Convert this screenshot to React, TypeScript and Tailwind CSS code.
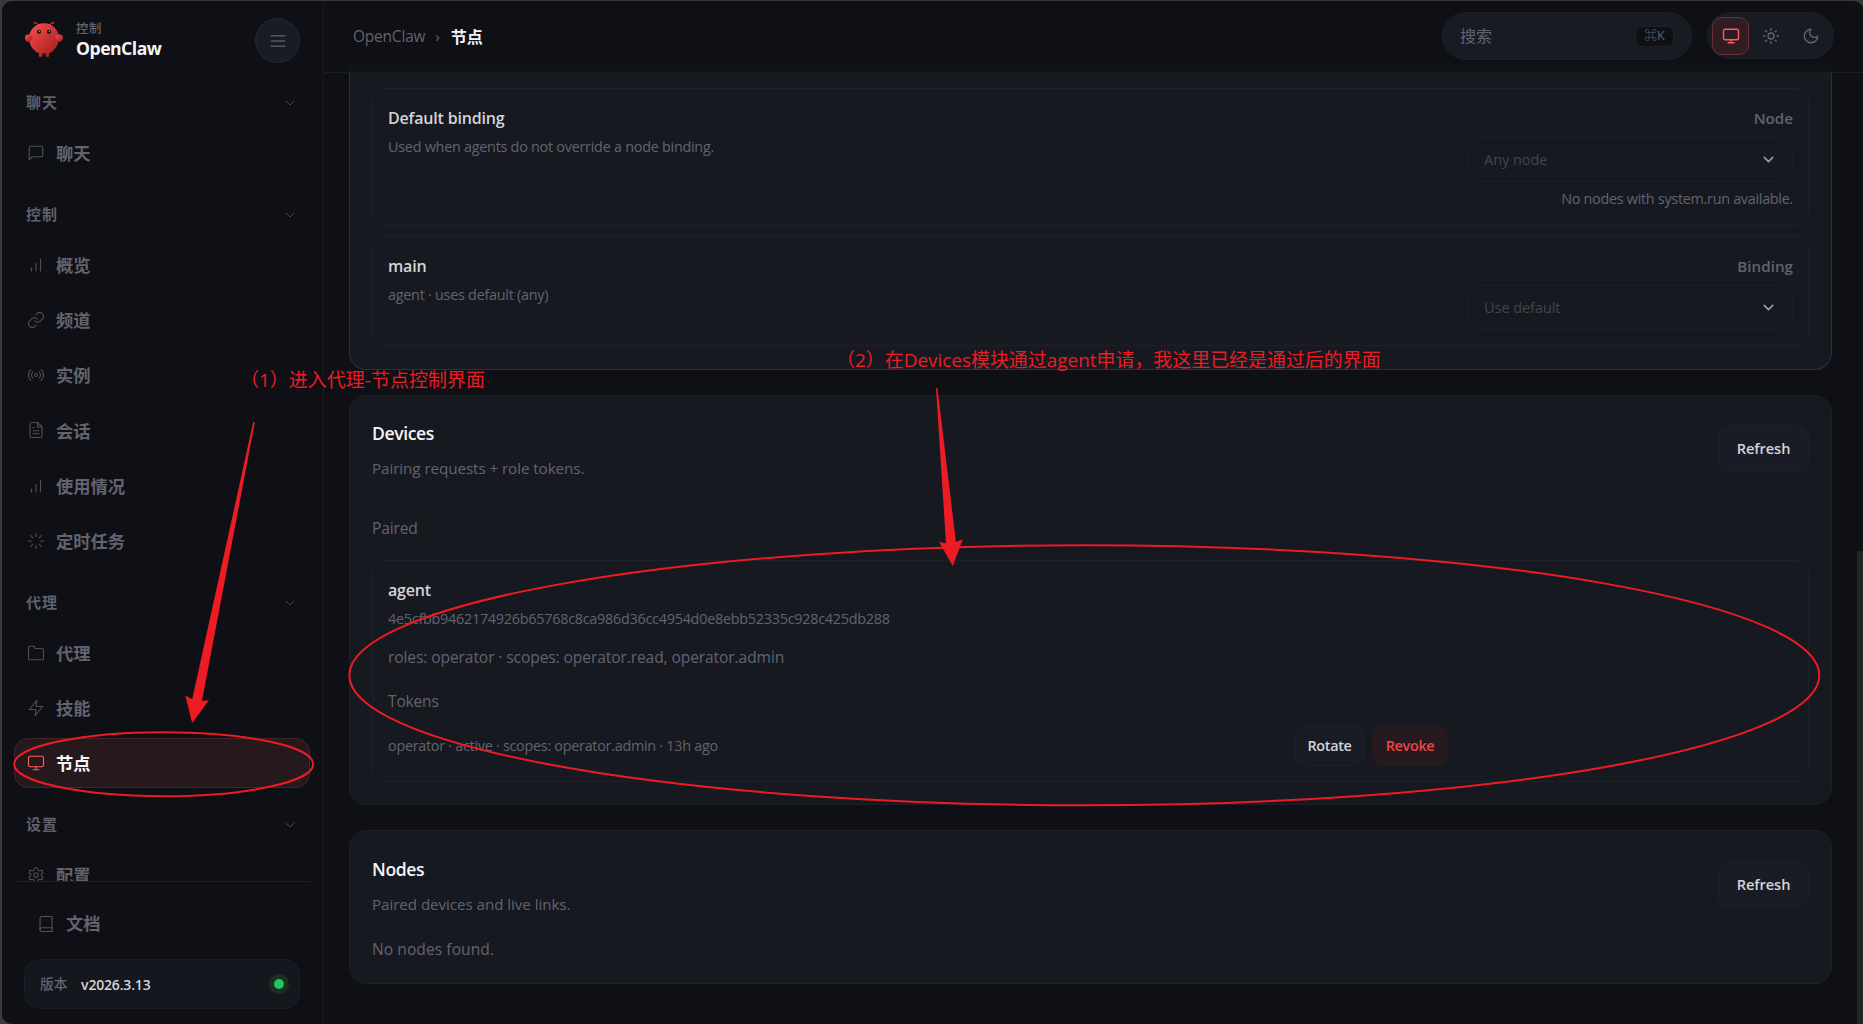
import {ReactNode} from 'react';
import clsx from 'clsx';

interface NavItem {
  label: string;
  icon: string;
  active?: boolean;
}

interface NavSection {
  title: string;
  items: NavItem[];
}

const icons: Record<string, ReactNode> = {
  chat: <path d="M21 15a2 2 0 0 1-2 2H7l-4 4V5a2 2 0 0 1 2-2h14a2 2 0 0 1 2 2z" />,
  bars: <path d="M12 20V10M18 20V4M6 20v-4" />,
  link: (
    <>
      <path d="M10 13a5 5 0 0 0 7.54.54l3-3a5 5 0 0 0-7.07-7.07l-1.72 1.71" />
      <path d="M14 11a5 5 0 0 0-7.54-.54l-3 3a5 5 0 0 0 7.07 7.07l1.71-1.71" />
    </>
  ),
  radio: (
    <>
      <circle cx="12" cy="12" r="2" />
      <path d="M16.24 7.76a6 6 0 0 1 0 8.49m-8.48-.01a6 6 0 0 1 0-8.49m11.31-2.82a10 10 0 0 1 0 14.14m-14.14 0a10 10 0 0 1 0-14.14" />
    </>
  ),
  file: (
    <>
      <path d="M14 2H6a2 2 0 0 0-2 2v16a2 2 0 0 0 2 2h12a2 2 0 0 0 2-2V8z" />
      <path d="M14 2v6h6M16 13H8M16 17H8M10 9H8" />
    </>
  ),
  loader: (
    <path d="M12 2v4M12 18v4M4.93 4.93l2.83 2.83M16.24 16.24l2.83 2.83M2 12h4M18 12h4M4.93 19.07l2.83-2.83M16.24 7.76l2.83-2.83" />
  ),
  folder: <path d="M22 19a2 2 0 0 1-2 2H4a2 2 0 0 1-2-2V5a2 2 0 0 1 2-2h5l2 3h9a2 2 0 0 1 2 2z" />,
  zap: <path d="M13 2 3 14h9l-1 8 10-12h-9l1-8z" />,
  monitor: (
    <>
      <rect x="2" y="3" width="20" height="14" rx="2" />
      <path d="M8 21h8M12 17v4" />
    </>
  ),
  settings: (
    <>
      <path d="M9.671 4.136a2.34 2.34 0 0 1 4.659 0 2.34 2.34 0 0 0 3.319 1.915 2.34 2.34 0 0 1 2.33 4.033 2.34 2.34 0 0 0 0 3.831 2.34 2.34 0 0 1-2.33 4.033 2.34 2.34 0 0 0-3.319 1.915 2.34 2.34 0 0 1-4.659 0 2.34 2.34 0 0 0-3.32-1.915 2.34 2.34 0 0 1-2.33-4.033 2.34 2.34 0 0 0 0-3.831A2.34 2.34 0 0 1 6.35 6.051a2.34 2.34 0 0 0 3.319-1.915" />
      <circle cx="12" cy="12" r="3" />
    </>
  ),
  book: (
    <>
      <path d="M4 19.5A2.5 2.5 0 0 1 6.5 17H20" />
      <path d="M6.5 2H20v20H6.5A2.5 2.5 0 0 1 4 19.5v-15A2.5 2.5 0 0 1 6.5 2z" />
    </>
  ),
  menu: <path d="M3 5h18M3 12h18M3 19h18" />,
  sun: (
    <>
      <circle cx="12" cy="12" r="4" />
      <path d="M12 2v2M12 20v2M4.93 4.93l1.41 1.41M17.66 17.66l1.41 1.41M2 12h2M20 12h2M6.34 17.66l-1.41 1.41M19.07 4.93l-1.41 1.41" />
    </>
  ),
  moon: <path d="M12 3a6 6 0 0 0 9 9 9 9 0 1 1-9-9z" />,
  chevron: <path d="m6 9 6 6 6-6" />,
};

const Icon = ({name, className, stroke = 1.5}: {name: string; className?: string; stroke?: number}) => (
  <svg
    viewBox="0 0 24 24"
    fill="none"
    stroke="currentColor"
    strokeWidth={stroke}
    strokeLinecap="round"
    strokeLinejoin="round"
    className={clsx('shrink-0', className)}
  >
    {icons[name]}
  </svg>
);

const sections: NavSection[] = [
  {title: '聊天', items: [{label: '聊天', icon: 'chat'}]},
  {
    title: '控制',
    items: [
      {label: '概览', icon: 'bars'},
      {label: '频道', icon: 'link'},
      {label: '实例', icon: 'radio'},
      {label: '会话', icon: 'file'},
      {label: '使用情况', icon: 'bars'},
      {label: '定时任务', icon: 'loader'},
    ],
  },
  {
    title: '代理',
    items: [
      {label: '代理', icon: 'folder'},
      {label: '技能', icon: 'zap'},
      {label: '节点', icon: 'monitor', active: true},
    ],
  },
  {title: '设置', items: [{label: '配置', icon: 'settings'}]},
];

const Logo = () => (
  <svg viewBox="0 0 120 120" fill="none" className="w-10 h-10 mt-[19px] shrink-0">
    <defs>
      <linearGradient id="claw" x1="0%" y1="0%" x2="100%" y2="100%">
        <stop offset="0%" stopColor="#ff4d4d" />
        <stop offset="100%" stopColor="#991b1b" />
      </linearGradient>
    </defs>
    <path
      fill="url(#claw)"
      d="M60 10C30 10 15 35 15 55C15 75 30 95 45 100L45 110L55 110L55 100C55 100 60 102 65 100L65 110L75 110L75 100C90 95 105 75 105 55C105 35 90 10 60 10Z"
    />
    <path fill="url(#claw)" d="M20 45C5 40 0 50 5 60C10 70 20 65 25 55C28 48 25 45 20 45Z" />
    <path fill="url(#claw)" d="M100 45C115 40 120 50 115 60C110 70 100 65 95 55C92 48 95 45 100 45Z" />
    <path d="M45 15Q35 5 30 8M75 15Q85 5 90 8" stroke="#ff4d4d" strokeWidth="3" strokeLinecap="round" />
    <circle cx="45" cy="35" r="6" fill="#050810" />
    <circle cx="75" cy="35" r="6" fill="#050810" />
    <circle cx="46" cy="34" r="2.5" fill="#00e5cc" />
    <circle cx="76" cy="34" r="2.5" fill="#00e5cc" />
  </svg>
);

const Sidebar = () => (
  <aside className="w-[322px] shrink-0 flex flex-col pl-3 pr-[13px] border-r border-[#1a1c23]">
    <div className="flex items-start h-[81px] pl-[10px] pr-[10px] shrink-0">
      <Logo />
      <div className="ml-3 mt-[18px] flex flex-col">
        <span className="text-[12.5px] leading-5 tracking-[0.6px] font-medium text-[#636370]">控制</span>
        <span className="text-[17.6px] leading-[19px] tracking-[-0.5px] font-bold text-[#f4f4f5]">OpenClaw</span>
      </div>
      <button className="ml-auto mt-[17px] w-[45px] h-[45px] rounded-full border border-[#262935] bg-[#191c24] flex items-center justify-center text-[#565764]">
        <Icon name="menu" className="w-[18px] h-[18px]" stroke={2} />
      </button>
    </div>

    <nav className="h-[799px] shrink-0 overflow-hidden flex flex-col gap-[16.2px]">
      {sections.map((section) => (
        <div key={section.title} className="shrink-0">
          <div className="h-10 mb-[6px] pl-3 pr-3 flex items-center justify-between text-[#5f606c]">
            <span className="text-[15px] tracking-[0.9px] font-bold">{section.title}</span>
            <Icon name="chevron" className="w-4 h-4 mt-[2px] text-[#444650]" />
          </div>
          <div className="flex flex-col gap-[5.1px]">
            {section.items.map((item) => (
              <div
                key={item.label}
                className={clsx(
                  'h-[50px] px-3 flex items-center gap-[11px] rounded-[14px] border',
                  item.active ? 'bg-[#26191d] border-[#46242b] text-[#f4f4f5]' : 'border-transparent text-[#636370]',
                )}
              >
                <Icon
                  name={item.icon}
                  className={clsx('w-[18px] h-[18px]', item.active ? 'text-[#ff5c5c]' : 'text-[#4e4f5a]')}
                />
                <span className="pt-[2px] text-[17.3px] font-bold">{item.label}</span>
              </div>
            ))}
          </div>
        </div>
      ))}
    </nav>

    <div className="border-t border-[#1e2028] px-[10px] flex flex-col">
      <div className="h-[50px] mt-[17px] pl-[13px] flex items-center gap-[11px] text-[#636370]">
        <Icon name="book" className="w-[18px] h-[18px] text-[#50515d]" />
        <span className="text-[17.2px] font-bold">文档</span>
      </div>
      <div className="h-[50px] mt-[10px] pl-[15px] pr-[10px] flex items-center rounded-2xl border border-[#1c1f27] bg-[#14171e]">
        <span className="text-[13.8px] font-medium text-[#636370]">版本</span>
        <span className="ml-[13.5px] text-[14px] tracking-[-0.18px] font-semibold text-[#d4d4d8]">v2026.3.13</span>
        <span className="ml-auto w-5 h-5 rounded-full bg-[#18311f] flex items-center justify-center">
          <span className="w-[10px] h-[10px] rounded-full bg-[#22c55e]" />
        </span>
      </div>
    </div>
  </aside>
);

const Topbar = () => (
  <header className="relative h-[72px] shrink-0 border-b border-[#1a1d23] flex items-start pl-[29px] pr-[29px] text-[#636370]">
    <div className="absolute left-[25px] right-[31px] bottom-0 h-[7px] bg-[#101317]" />
    <div className="h-[71px] flex items-center">
      <span className="text-[15.4px] tracking-[-0.15px]">OpenClaw</span>
      <span className="ml-[10px] text-[15px]">›</span>
      <span className="ml-[11px] text-[16px] font-bold text-[#f4f4f5]">节点</span>
    </div>
    <div className="ml-auto mt-[11px] w-[250px] h-12 rounded-full border border-[#1e2028] bg-[#181b22] flex items-center pl-[17px] pr-[17px]">
      <span className="text-[16px]">搜索</span>
      <span className="ml-auto w-[39px] h-[21px] rounded-[7px] border border-[#1e2028] bg-[#0e1015] flex items-center justify-center text-[12.5px]">
        ⌘K
      </span>
    </div>
    <div className="ml-[15px] mt-[11px] w-[127px] h-[47px] rounded-full border border-[#1e2028] bg-[#181b22] flex items-center pl-1 gap-[3px]">
      <div className="w-[37px] h-[38px] rounded-[10px] border border-[#6b2f35] bg-[#301d23] flex items-center justify-center">
        <Icon name="monitor" className="w-[18px] h-[18px] text-[#ff5c5c]" stroke={1.8} />
      </div>
      <div className="w-[37px] h-[38px] flex items-center justify-center">
        <Icon name="sun" className="w-[18px] h-[18px]" stroke={1.8} />
      </div>
      <div className="w-[37px] h-[38px] flex items-center justify-center">
        <Icon name="moon" className="w-[18px] h-[18px]" stroke={1.8} />
      </div>
    </div>
  </header>
);

const Select = ({value}: {value: string}) => (
  <div className="w-[325px] h-[45px] mt-[5px] rounded-xl border border-[#1c1f26] pl-[15px] pr-[15px] flex items-center justify-between">
    <span className="text-[14.6px] tracking-[-0.1px] text-[#43444e]">{value}</span>
    <Icon name="chevron" className="w-[17px] h-[17px] text-[#9a9aa3]" stroke={2.3} />
  </div>
);

const Refresh = () => (
  <button className="mt-[7px] w-[91px] h-[47px] rounded-xl border border-[#1d2028] bg-[#191c24] text-[14.6px] tracking-[-0.05px] font-semibold text-[#d4d4d8]">
    Refresh
  </button>
);

const CardHeader = ({title, sub}: {title: string; sub: string}) => (
  <div className="h-16 flex items-start justify-between">
    <div>
      <h2 className="text-[17.6px] leading-[30px] tracking-[-0.4px] font-semibold text-[#f4f4f5]">{title}</h2>
      <p className="mt-[6px] text-[15.2px] leading-[28px] tracking-[-0.07px] text-[#636370]">{sub}</p>
    </div>
    <Refresh />
  </div>
);

const ItemText = ({title, sub}: {title: string; sub: string}) => (
  <div>
    <div className="text-[16px] leading-7 tracking-[-0.18px] font-semibold text-[#d4d4d8]">{title}</div>
    <div className="mt-0.5 text-[14.4px] leading-[26px] tracking-[-0.26px] text-[#636370]">{sub}</div>
  </div>
);

const item = 'rounded-xl border border-[#1d2027] p-[15px]';

const Content = () => (
  <main className="flex-1 overflow-hidden pl-[25px] pr-[31px]">
    <section className="h-[297px] rounded-b-[17px] border border-t-0 border-[#2e3040] bg-[#161920] px-[22px] pt-[15px] flex flex-col gap-[10px]">
      <div className={clsx(item, 'h-[138px] flex justify-between')}>
        <ItemText title="Default binding" sub="Used when agents do not override a node binding." />
        <div className="flex flex-col items-end text-[#636370]">
          <span className="text-[15.2px] leading-7 font-semibold">Node</span>
          <Select value="Any node" />
          <span className="mt-[7px] text-[14.4px] leading-5 tracking-[-0.29px]">No nodes with system.run available.</span>
        </div>
      </div>
      <div className={clsx(item, 'h-[110px] flex justify-between')}>
        <ItemText title="main" sub="agent · uses default (any)" />
        <div className="flex flex-col items-end text-[#636370]">
          <span className="text-[15.2px] leading-7 font-semibold">Binding</span>
          <Select value="Use default" />
        </div>
      </div>
    </section>

    <section className="mt-[25px] h-[410px] rounded-[17px] border border-[#1e2028] bg-[#161920] p-[22px]">
      <CardHeader title="Devices" sub="Pairing requests + role tokens." />
      <p className="mt-[34px] text-[15.6px] leading-6 tracking-[-0.15px] text-[#636370]">Paired</p>
      <div className={clsx(item, 'mt-5 h-[222px] text-[#636370]')}>
        <ItemText title="agent" sub="4e5cfbb9462174926b65768c8ca986d36cc4954d0e8ebb52335c928c425db288" />
        <p className="mt-[13px] text-[15.6px] leading-6 tracking-[-0.11px]">
          roles: operator · scopes: operator.read, operator.admin
        </p>
        <p className="mt-5 text-[15.6px] leading-6 tracking-[-0.2px]">Tokens</p>
        <div className="mt-3 w-[1060px] h-[41px] flex items-center">
          <span className="text-[14.4px] tracking-[-0.28px]">
            operator · active · scopes: operator.admin · 13h ago
          </span>
          <button className="ml-auto w-[71px] h-[41px] rounded-xl border border-[#1d2028] bg-[#191c24] text-[14.4px] tracking-[-0.3px] font-semibold text-[#d4d4d8]">
            Rotate
          </button>
          <button className="ml-[7px] w-[76px] h-[41px] rounded-xl bg-[#271a1f] text-[14.4px] tracking-[-0.3px] font-semibold text-[#ef4444]">
            Revoke
          </button>
        </div>
      </div>
    </section>

    <section className="mt-[25px] h-[154px] rounded-[17px] border border-[#1e2028] bg-[#161920] px-[22px] pt-[23px]">
      <CardHeader title="Nodes" sub="Paired devices and live links." />
      <p className="mt-[19px] text-[15.6px] leading-6 tracking-[0.05px] text-[#636370]">No nodes found.</p>
    </section>
  </main>
);

// red pen marks drawn above the page
const Annotations = () => (
  <div className="absolute inset-0 pointer-events-none text-[#ed1c24]">
    <svg viewBox="0 0 1863 1024" className="absolute inset-0 w-[1863px] h-[1024px]" fill="none">
      <ellipse cx="163.7" cy="764.2" rx="149.5" ry="32" stroke="currentColor" strokeWidth="2" />
      <ellipse cx="1084.3" cy="675.3" rx="735" ry="130" stroke="currentColor" strokeWidth="2" />
      <path
        fill="currentColor"
        d="M253.2 422L254.8 422.4L202 700.8L208.9 700.2L192.2 723L185.3 695.5L192.2 699.3Z"
      />
      <path fill="currentColor" d="M936 388L937.5 388L955.9 542L962.8 539.3L952.8 566L938.9 541.5L946 543.6Z" />
    </svg>
    <span className="absolute left-[240px] top-[366px] text-[19px] leading-7 whitespace-nowrap">
      （1）进入代理-节点控制界面
    </span>
    <span className="absolute left-[836px] top-[346px] text-[18.95px] leading-7 whitespace-nowrap">
      （2）在Devices模块通过agent申请，我这里已经是通过后的界面
    </span>
  </div>
);

const App = () => (
  <div
    lang="zh-CN"
    className="relative w-full h-screen overflow-hidden bg-[#39393b] pl-[2px] pt-px font-['Open_Sans','Noto_Sans_CJK_SC',sans-serif]"
  >
    <div className="h-full flex overflow-hidden bg-[#0e1015] rounded-l-[10px] rounded-tr-[9px]">
      <Sidebar />
      <div className="flex-1 min-w-0 flex flex-col">
        <Topbar />
        <Content />
      </div>
    </div>
    <div className="absolute right-0 bottom-0 w-[6px] h-[473px] bg-[#242428]" />
    <Annotations />
  </div>
);

export default App;
